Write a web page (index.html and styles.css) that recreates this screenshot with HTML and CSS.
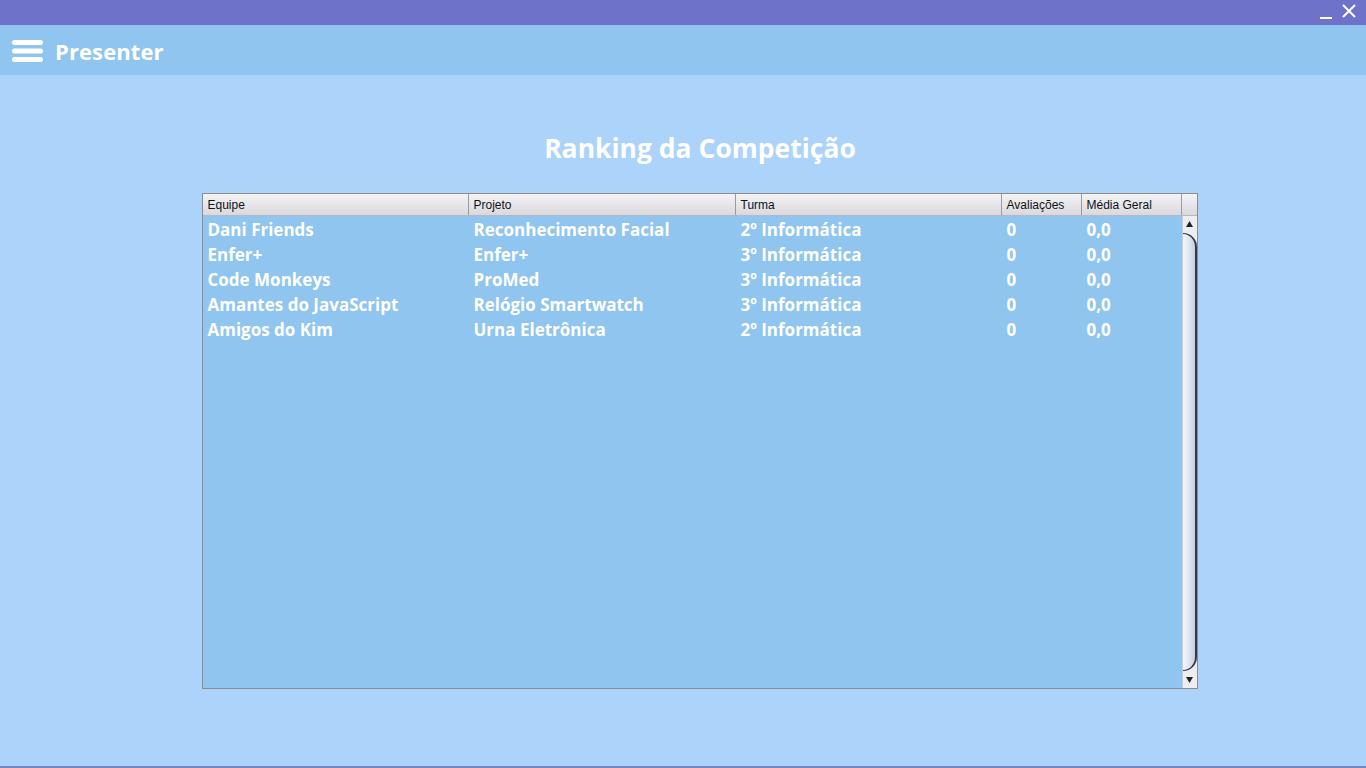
FILE: index.html
```html
<!DOCTYPE html>
<html lang="pt">
<head>
<meta charset="utf-8">
<title>Presenter</title>
<link rel="stylesheet" href="styles.css">
</head>
<body>
<div class="window">
  <div class="titlebar">
    <span class="win-btn min"></span>
    <svg class="win-btn close" width="14" height="14" viewBox="0 0 14 14"><path d="M1 1 L13 13 M13 1 L1 13" stroke="#fff" stroke-width="2"/></svg>
  </div>
  <header class="appbar">
    <svg class="menu-icon" width="31" height="22" viewBox="0 0 31 22">
      <rect x="0" y="0" width="31" height="5" rx="2.5" fill="#fff"/>
      <rect x="0" y="8.5" width="31" height="5" rx="2.5" fill="#fff"/>
      <rect x="0" y="17" width="31" height="5" rx="2.5" fill="#fff"/>
    </svg>
    <span class="app-title">Presenter</span>
  </header>
  <main class="content">
    <h1 class="page-title">Ranking da Competição</h1>
    <div class="table">
      <div class="thead">
        <div class="th c1">Equipe</div>
        <div class="th c2">Projeto</div>
        <div class="th c3">Turma</div>
        <div class="th c4">Avaliações</div>
        <div class="th c5">Média Geral</div>
        <div class="th c6"></div>
      </div>
      <div class="tbody">
        <div class="rows">
          <div class="tr"><div class="td c1">Dani Friends</div><div class="td c2">Reconhecimento Facial</div><div class="td c3">2º Informática</div><div class="td c4">0</div><div class="td c5">0,0</div></div>
          <div class="tr"><div class="td c1">Enfer+</div><div class="td c2">Enfer+</div><div class="td c3">3º Informática</div><div class="td c4">0</div><div class="td c5">0,0</div></div>
          <div class="tr"><div class="td c1">Code Monkeys</div><div class="td c2">ProMed</div><div class="td c3">3º Informática</div><div class="td c4">0</div><div class="td c5">0,0</div></div>
          <div class="tr"><div class="td c1">Amantes do JavaScript</div><div class="td c2">Relógio Smartwatch</div><div class="td c3">3º Informática</div><div class="td c4">0</div><div class="td c5">0,0</div></div>
          <div class="tr"><div class="td c1">Amigos do Kim</div><div class="td c2">Urna Eletrônica</div><div class="td c3">2º Informática</div><div class="td c4">0</div><div class="td c5">0,0</div></div>
        </div>
        <div class="scrollbar">
          <div class="arrow up"><svg width="7" height="6" viewBox="0 0 7 6"><path d="M3.5 0 L7 6 L0 6 Z" fill="#222"/></svg></div>
          <div class="track"><div class="thumb"></div></div>
          <div class="arrow down"><svg width="7" height="6" viewBox="0 0 7 6"><path d="M0 0 L7 0 L3.5 6 Z" fill="#222"/></svg></div>
        </div>
      </div>
    </div>
  </main>
</div>
</body>
</html>
```
FILE: styles.css
```css
* { box-sizing: border-box; }
html, body { margin: 0; padding: 0; }
body {
  width: 1366px;
  height: 768px;
  overflow: hidden;
  background: #acd3f9;
  font-family: "Open Sans", "Noto Sans", sans-serif;
}
.window {
  height: 768px;
  display: flex;
  flex-direction: column;
  border-bottom: 2px solid #7b84c4;
}
.titlebar {
  height: 25px;
  background: #6f72c9;
  display: flex;
  justify-content: flex-end;
  align-items: center;
  gap: 10px;
  padding-right: 10px;
}
.win-btn.min {
  width: 12px;
  height: 2px;
  background: #fff;
  margin-top: 10px;
}
.win-btn.close { margin-top: -4px; }
.appbar {
  height: 50px;
  background: #8fc5ee;
  display: flex;
  align-items: center;
  padding-left: 12px;
  gap: 12px;
}
.menu-icon { display: block; margin-top: 2px; }
.app-title {
  color: #fff;
  font-weight: 700;
  font-size: 22px;
  letter-spacing: 0.1px;
  margin-top: 2px;
}
.content {
  flex: 1;
  display: flex;
  flex-direction: column;
  align-items: center;
}
.page-title {
  margin: 55px 0 0 0;
  height: 63px;
  color: #fff;
  font-size: 26.5px;
  font-weight: 700;
  line-height: 36px;
  padding-left: 34px;
}
.table {
  width: 996px;
  height: 496px;
  margin-left: 33px;
  border: 1px solid #8c8c8c;
  background: #8fc5ee;
  display: flex;
  flex-direction: column;
}
.thead {
  height: 22px;
  display: flex;
  background: linear-gradient(#f3f3f5, #e4e4e8 60%, #d8d8dd);
  border-bottom: 1px solid #b8b8c0;
}
.th {
  font-family: "Liberation Sans", Arial, sans-serif;
  font-size: 12px;
  color: #111;
  line-height: 22px;
  padding-left: 5px;
  border-right: 1px solid #9a9aa2;
}
.c1 { width: 266px; }
.c2 { width: 267px; }
.c3 { width: 266px; }
.c4 { width: 80px; }
.c5 { width: 100px; }
.c6 { flex: 1; border-right: none; }
.tbody {
  flex: 1;
  display: flex;
}
.rows {
  flex: 1;
  padding-top: 1px;
}
.tr {
  display: flex;
  height: 25px;
}
.td {
  color: #fff;
  font-weight: 700;
  font-size: 17px;
  line-height: 25px;
  padding-left: 5px;
  white-space: nowrap;
}
.scrollbar {
  width: 15px;
  display: flex;
  flex-direction: column;
  background: #ecedf0;
  border-left: 1px solid #c9cbd2;
}
.arrow {
  height: 16px;
  display: flex;
  align-items: center;
  justify-content: center;
}
.track {
  flex: 1;
  display: flex;
  padding: 1px 0;
}
.thumb {
  flex: 1;
  border-radius: 0 14px 14px 0 / 0 14px 14px 0;
  border-right: 2px solid #2d3a4d;
  border-top: 1px solid #2d3a4d;
  border-bottom: 1px solid #2d3a4d;
  background: linear-gradient(90deg, #f4f7fb, #dfe6ef 50%, #c3cfdd);
}
```
